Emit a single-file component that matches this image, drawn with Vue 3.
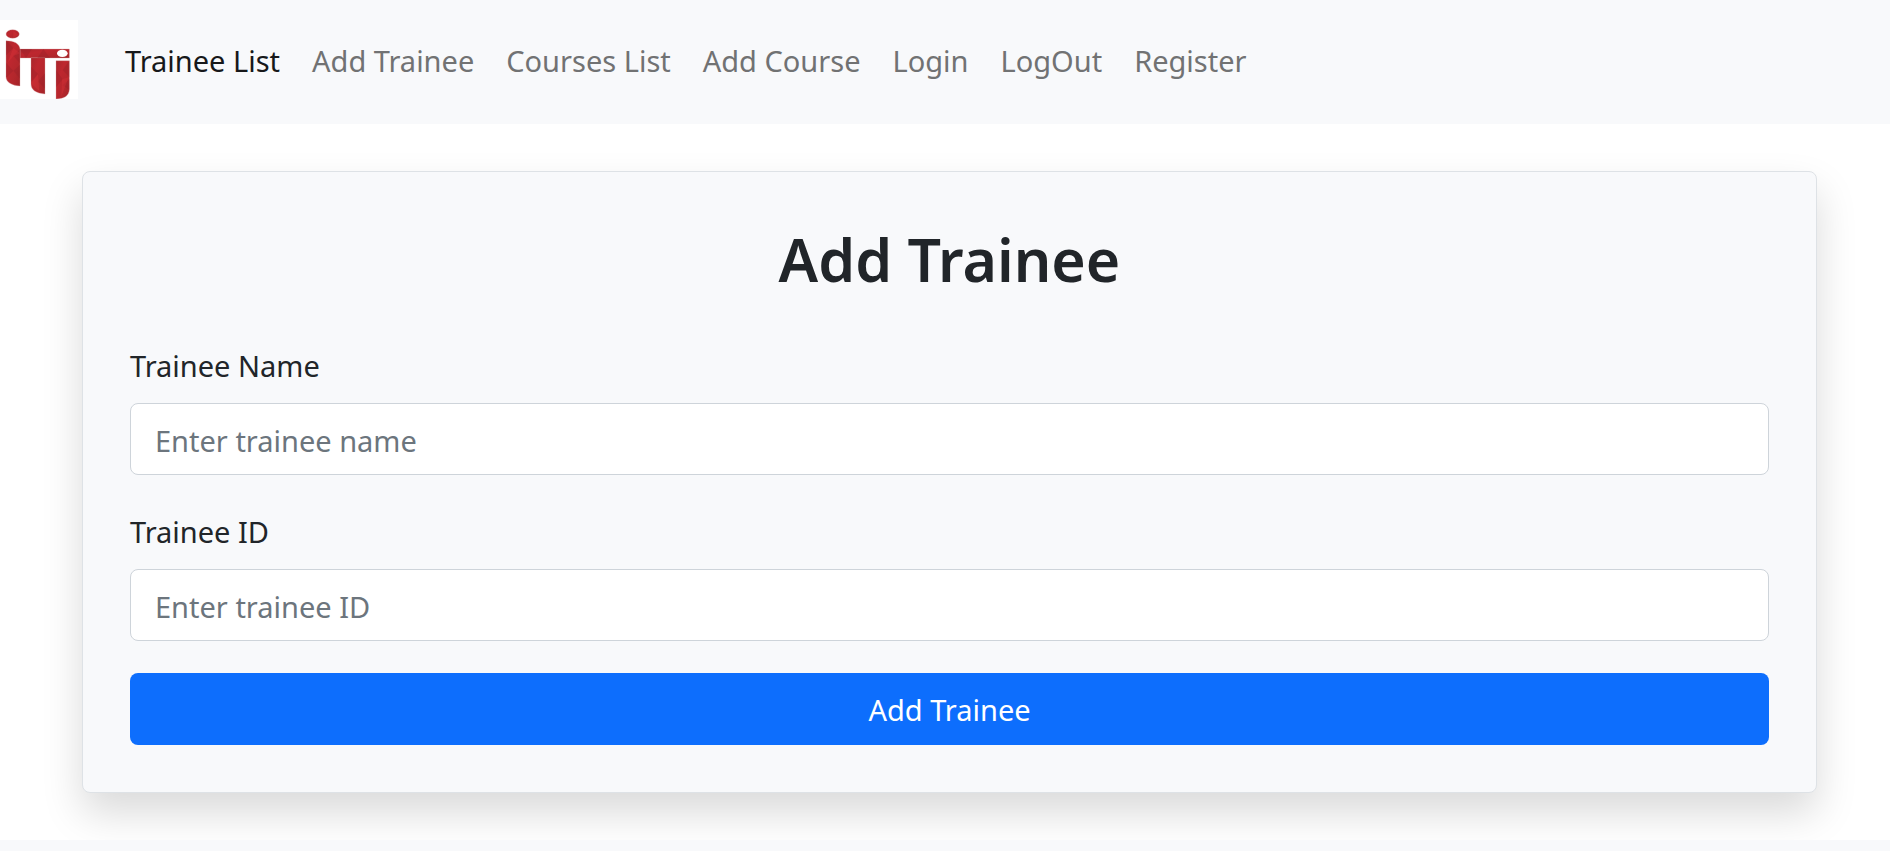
<script setup>
import { ref } from 'vue'

const links = ['Trainee List', 'Add Trainee', 'Courses List', 'Add Course', 'Login', 'LogOut', 'Register']
const active = ref('Trainee List')
const name = ref('')
const id = ref('')
</script>

<template>
  <div class="page">
    <nav class="navbar">
      <a class="brand" href="#" aria-label="ITI">
        <svg viewBox="0 0 234 237" width="78" height="79">
          <defs>
            <linearGradient id="red" x1="0" y1="0" x2="1" y2="1">
              <stop offset="0" stop-color="#a9262c" />
              <stop offset="0.35" stop-color="#be272f" />
              <stop offset="0.7" stop-color="#b3272c" />
              <stop offset="1" stop-color="#a32328" />
            </linearGradient>
          </defs>
          <rect width="234" height="237" fill="#fff" />
          <g fill="url(#red)" stroke="#d9a3a6" stroke-width="1">
            <ellipse cx="38" cy="42" rx="20" ry="13" />
            <path d="M60 87H208V114H60Z" />
            <path d="M93 113H135V222C108 220 93 210 93 192Z" />
            <path d="M168 122H208V207C208 227 193 237 168 237Z" />
            <path d="M18 62C42 62 58 70 60 87V198C35 196 18 187 18 170Z" />
          </g>
          <g fill="#8f1f27" opacity="0.3">
            <path d="M18 62L40 84L18 106ZM60 87L40 108L60 130ZM18 128L40 152L18 174ZM40 152L60 134V176Z" />
            <path d="M60 87H96L78 114ZM112 114L130 87L150 114ZM93 140L114 162L93 186ZM135 160L114 184L135 206Z" />
            <path d="M208 122L188 150L208 172ZM168 150L188 178L168 202ZM188 196L208 178V210Z" />
          </g>
          <g fill="#e0343c" opacity="0.3">
            <path d="M40 84L60 100L40 108L22 130ZM40 34L56 44L40 54ZM93 190L114 162L118 214ZM186 178L206 172L184 230Z" />
          </g>
          <ellipse cx="187" cy="100" rx="16" ry="11" fill="#fff" />
        </svg>
      </a>
      <ul class="links">
        <li v-for="link in links" :key="link">
          <a href="#" :class="{ active: link === active }" @click.prevent="active = link">{{ link }}</a>
        </li>
      </ul>
    </nav>

    <main class="content">
      <form class="card" @submit.prevent>
        <h2>Add Trainee</h2>
        <div class="field">
          <label for="trainee-name">Trainee Name</label>
          <input id="trainee-name" v-model="name" type="text" placeholder="Enter trainee name" />
        </div>
        <div class="field">
          <label for="trainee-id">Trainee ID</label>
          <input id="trainee-id" v-model="id" type="text" placeholder="Enter trainee ID" />
        </div>
        <button type="submit">Add Trainee</button>
      </form>
    </main>

    <footer class="footer"></footer>
  </div>
</template>

<style>
body {
  margin: 0;
  background: #fff;
}
</style>

<style scoped>
.page {
  display: flex;
  flex-direction: column;
  min-height: 100vh;
  font-family: 'Segoe UI', 'Noto Sans', sans-serif;
  font-size: 29px;
  line-height: 50px;
  color: #212529;
}

.page * {
  box-sizing: border-box;
}

.navbar {
  display: flex;
  align-items: center;
  padding: 20px 0 25px;
  background: #f8f9fb;
}

.brand,
.brand svg {
  display: block;
}

.links {
  display: flex;
  gap: 32px;
  margin: 0 0 0 47px;
  padding: 3px 0 0;
  list-style: none;
}

.links a {
  color: #717273;
  text-decoration: none;
}

.links a.active {
  color: #17181a;
}

.content {
  padding: 47px 73px 47px 82px;
}

.card {
  display: flex;
  flex-direction: column;
  gap: 32px;
  padding: 47px;
  background: #f8f9fb;
  border: 1px solid #dee2e6;
  border-radius: 8px;
  box-shadow: 0 20px 40px rgba(0, 0, 0, 0.15);
}

h2 {
  margin: 0 0 10px;
  font-size: 59px;
  line-height: 80px;
  font-weight: 600;
  text-align: center;
}

.field {
  display: flex;
  flex-direction: column;
  gap: 12px;
}

input,
button {
  width: 100%;
  height: 72px;
  margin: 0;
  padding: 2px 24px 0;
  font: inherit;
  border-radius: 8px;
}

input {
  color: #212529;
  background: #fff;
  border: 1px solid #ced4da;
}

input::placeholder {
  color: #6c757d;
  opacity: 1;
}

button {
  color: #fff;
  background: #0d6efd;
  border: 0;
  cursor: pointer;
}

.footer {
  flex: 1;
  background: #f8f9fb;
}
</style>
